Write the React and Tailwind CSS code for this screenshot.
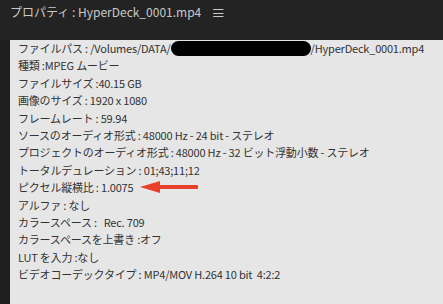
import React from "react";

const font = { fontFamily: "'Noto Sans CJK JP', sans-serif" };

const rows = [
    "種類 :MPEG ムービー",
    "ファイルサイズ :40.15 GB",
    "画像のサイズ : 1920 x 1080",
    "フレームレート : 59.94",
    "ソースのオーディオ形式 : 48000 Hz - 24 bit - ステレオ",
    "プロジェクトのオーディオ形式 : 48000 Hz - 32 ビット浮動小数 - ステレオ",
    "トータルデュレーション : 01;43;11;12",
    "ピクセル縦横比 : 1.0075",
    "アルファ : なし",
    "カラースペース :   Rec. 709",
    "カラースペースを上書き :オフ",
    "LUT を入力 :なし",
    "ビデオコーデックタイプ : MP4/MOV H.264 10 bit  4:2:2",
];

export default function App() {
    return (
        <div
            className="w-[443px] h-[304px] overflow-hidden bg-[#232323] flex flex-col"
            style={font}
        >
            <div className="h-[40px] shrink-0 flex items-start pt-[3px] pl-[10px] gap-[10px] text-[#c9c9c9] text-[12px] leading-[18px]">
                <span>プロパティ : HyperDeck_0001.mp4</span>
                <span className="text-[14px]">≡</span>
            </div>
            <div className="flex flex-1 min-w-0">
                <div className="w-[10px] shrink-0 bg-[#1e1e1e]" />
                <div className="relative flex-1 min-w-0 bg-[#e6e6e6] pl-[8px] text-[#333333] text-[11px] leading-[17.4px] tracking-[-0.2px] whitespace-pre">
                    <div className="flex items-center">
                        <span>ファイルパス : /Volumes/DATA/</span>
                        <span className="inline-block w-[140px] h-[15px] shrink-0 rounded-full bg-black" />
                        <span>/HyperDeck_0001.mp4</span>
                    </div>
                    {rows.map((r) => (
                        <div key={r}>{r}</div>
                    ))}
                    <svg
                        className="absolute left-[130px] top-[139px]"
                        width="60"
                        height="16"
                        viewBox="0 0 60 16"
                    >
                        <polygon points="0,8 20,2 20,14" fill="#e8402a" />
                        <rect x="18" y="6" width="40" height="4" rx="1" fill="#e8402a" />
                    </svg>
                </div>
            </div>
        </div>
    );
}
